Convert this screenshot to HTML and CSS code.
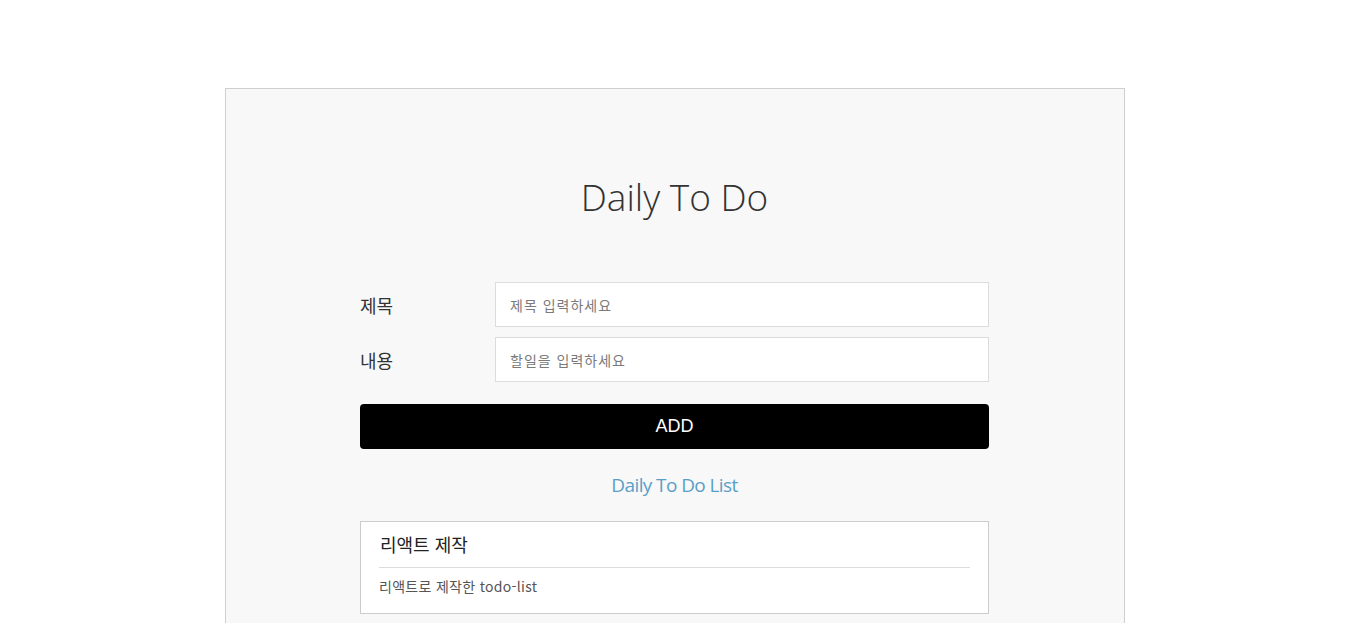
FILE: index.html
```html
<!DOCTYPE html>
<html lang="ko">
<head>
<meta charset="utf-8">
<title>Daily To Do</title>
<link rel="stylesheet" href="styles.css">
</head>
<body>
<div class="page">
  <main class="app">
    <h1 class="title">Daily To Do</h1>
    <form class="form">
      <div class="row">
        <label class="label" for="t">제목</label>
        <input class="input" id="t" type="text" placeholder="제목 입력하세요">
      </div>
      <div class="row">
        <label class="label" for="c">내용</label>
        <input class="input" id="c" type="text" placeholder="할일을 입력하세요">
      </div>
      <button class="add" type="button">ADD</button>
    </form>
    <h2 class="list-title">Daily To Do List</h2>
    <div class="card">
      <div class="card-title">리액트 제작</div>
      <div class="card-body">리액트로 제작한 todo-list</div>
    </div>
  </main>
</div>
</body>
</html>
```
FILE: styles.css
```css
* { box-sizing: border-box; }
html, body { margin: 0; padding: 0; background: #fff; }
body {
  font-family: "Noto Sans", "Open Sans", "Noto Sans CJK KR", sans-serif;
  color: #333;
  overflow: hidden;
}
.page {
  padding: 88px 0 0 4px;
  display: flex;
  justify-content: center;
}
.app {
  width: 900px;
  height: 600px;
  background: #f8f8f8;
  border: 1px solid #cfcfcf;
  padding: 0 135px 0 134px;
}
.title {
  margin: 0;
  padding-top: 83px;
  height: 193px;
  text-align: center;
  font-weight: 300;
  font-size: 37px;
  line-height: 50px;
  color: #333;
  font-family: "Open Sans", "Noto Sans", sans-serif;
}
.form {
  display: flex;
  flex-direction: column;
  gap: 10px;
}
.row {
  display: flex;
  align-items: center;
}
.label {
  width: 135px;
  font-size: 18px;
  color: #333;
  font-family: "Noto Sans CJK KR", sans-serif;
}
.input {
  flex: 1;
  height: 45px;
  border: 1px solid #dcdcdc;
  background: #fff;
  padding: 0 14px;
  font-size: 14px;
  letter-spacing: 1px;
  font-family: "Noto Sans CJK KR", sans-serif;
  color: #333;
  outline: none;
}
.input::placeholder { color: #7a7a7a; }
.add {
  margin-top: 12px;
  height: 45px;
  background: #000;
  color: #fff;
  border: none;
  border-radius: 4px;
  font-size: 18px;
  font-family: "Liberation Sans", Arial, sans-serif;
  font-weight: 400;
}
.list-title {
  margin: 0;
  height: 72px;
  line-height: 72px;
  text-align: center;
  font-weight: 400;
  font-size: 19px;
  color: #5a9fc8;
  font-family: "Open Sans", "Noto Sans", sans-serif;
  letter-spacing: -0.6px;
}
.card {
  background: #fff;
  border: 1px solid #cccccc;
  padding: 0 18px;
}
.card-title {
  height: 46px;
  padding-top: 9px;
  line-height: 26px;
  font-size: 18px;
  color: #222;
  padding-left: 1px;
  border-bottom: 1px solid #dcdcdc;
  font-family: "Noto Sans CJK KR", sans-serif;
}
.card-body {
  padding: 7px 0 16px;
  line-height: 22px;
  font-size: 14px;
  letter-spacing: 0.3px;
  color: #555;
  font-family: "Noto Sans CJK KR", sans-serif;
}
```
